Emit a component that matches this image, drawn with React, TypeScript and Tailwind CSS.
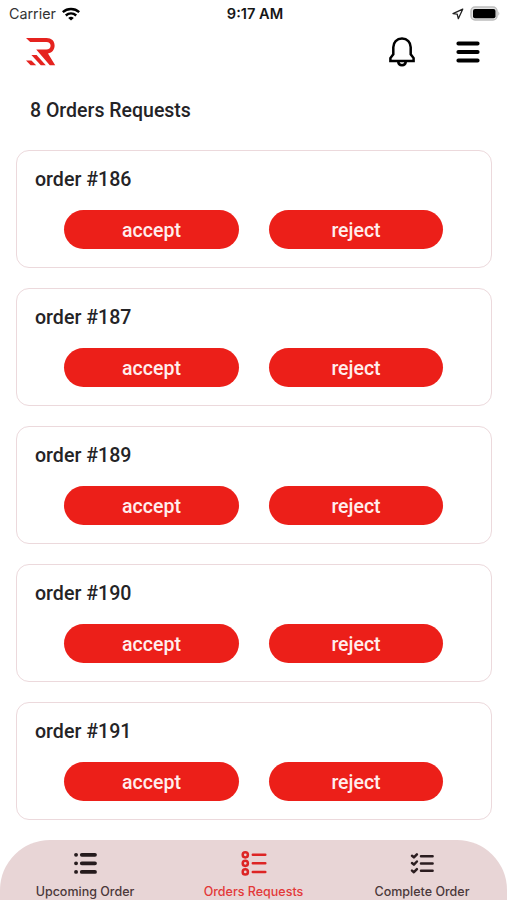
import React from "react";

const orders: number[] = [186, 187, 189, 190, 191];

function Wifi() {
  return (
    <svg width="18" height="14" viewBox="0 0 18 14" fill="none" stroke="#000" strokeWidth="2.4">
      <path d="M.8 5.1C5.4.9 12.6.9 17.2 5.1" />
      <path d="M3.8 8.5C6.8 5.7 11.2 5.7 14.2 8.5" />
      <path d="M9 13.6 6.2 10.9Q9 8.6 11.8 10.9Z" fill="#000" stroke="none" />
    </svg>
  );
}

function LocationArrow() {
  return (
    <svg width="12" height="12" viewBox="0 0 12 12" fill="none" stroke="#222" strokeWidth="1.3" strokeLinejoin="round">
      <path d="M10.7 1.2 1 5.6 5.2 6.2 6.3 10.7Z" />
    </svg>
  );
}

function Battery() {
  return (
    <svg width="31" height="15" viewBox="0 0 31 15">
      <rect x="1" y="1" width="26" height="13" rx="4" fill="#e3e3e3" stroke="#bdbdbd" strokeWidth="1.5" />
      <rect x="3" y="3" width="22.5" height="9.2" rx="2" fill="#000" />
      <path d="M28.3 5.2Q30.4 7.5 28.3 9.8Z" fill="#bdbdbd" />
    </svg>
  );
}

function Logo() {
  return (
    <svg width="30" height="28" viewBox="0 0 30 28" fill="#e5231f">
      <path d="M0 0H20.5C25.5 0 28.6 3 28.6 7.4 28.6 11.4 26.3 14.6 22 15.4L29.2 27.3H23.8L10.2 11.4H20.2C23 11.4 24.6 10 24.6 7.7 24.6 5.4 23 4 20.4 4H4.2Z" />
      <path d="M5.4 17H10.6L19.8 27.3H14.8Z" />
      <path d="M0 22.4H5.4L10.2 27.3H4.6Z" />
    </svg>
  );
}

function Bell() {
  return (
    <svg width="26" height="30" viewBox="0 0 26 30" fill="none" stroke="#000" strokeWidth="2.5" strokeLinejoin="miter">
      <path d="M13 1.6C7.7 1.6 4.3 5.3 4.3 10.3V17.3L1.4 21.1V24.1H24.6V21.1L21.7 17.3V10.3C21.7 5.3 18.3 1.6 13 1.6Z" />
      <path d="M9.2 24.6C9.4 27 10.8 28.2 13 28.2S16.6 27 16.8 24.6" />
    </svg>
  );
}

function Menu() {
  return (
    <svg width="24" height="22" viewBox="0 0 24 22" stroke="#000" strokeWidth="4" strokeLinecap="round">
      <path d="M2.4 2.4H21.6M2.4 11H21.6M2.4 19.6H21.6" />
    </svg>
  );
}

function ListIcon() {
  return (
    <svg width="24" height="26" viewBox="0 0 24 26" stroke="#251b1d" strokeWidth="3.8" strokeLinecap="round">
      <path d="M3 4.8h.1M3 13.3h.1M3 21.9h.1M8.8 4.8H22M8.8 13.3H22M8.8 21.9H22" />
    </svg>
  );
}

function RequestsIcon() {
  return (
    <svg width="26" height="26" viewBox="0 0 26 26" fill="none" stroke="#dd2525" strokeWidth="2.5" strokeLinecap="round">
      <circle cx="4.3" cy="4.8" r="2.6" />
      <circle cx="4.3" cy="13.3" r="2.6" />
      <circle cx="4.3" cy="21.9" r="2.6" />
      <path d="M11.8 4.8H24.3M11.8 13.3H24.3M11.8 21.9H24.3" />
    </svg>
  );
}

function CheckIcon() {
  return (
    <svg width="24" height="26" viewBox="0 0 24 26" fill="none" stroke="#2b1d20" strokeWidth="2.5" strokeLinecap="round" strokeLinejoin="round">
      <path d="M2 5.8 3.9 7.4 6.9 4.3M2 13 3.9 14.6 6.9 11.5M2 20.6 3.9 22.2 6.9 19.1" />
      <path d="M11 6.2H22.6M11 13.4H22.6M11 20.8H22.6" />
    </svg>
  );
}

function OrderCard({ id }: { id: number }) {
  return (
    <article className="h-[118px] rounded-[13px] border-[1.5px] border-[#ecd9dc] pt-[17px]">
      <h2 className="pl-[18px] text-[19.6px] leading-6 font-medium text-[#242326]">order #{id}</h2>
      <div className="mt-[18px] flex gap-[30px] pl-[47px]">
        <button className="h-[39px] w-[175px] rounded-full bg-[#ec1f19] pt-[2px] text-[19.5px] font-medium text-[#ffeeed]">accept</button>
        <button className="h-[39px] w-[174px] rounded-full bg-[#ec1f19] pt-[2px] text-[19.5px] font-medium text-[#ffeeed]">reject</button>
      </div>
    </article>
  );
}

export default function App() {
  return (
    <div className="flex h-[900px] w-[507px] flex-col overflow-hidden bg-white font-[Roboto,sans-serif]">
      <header className="flex h-[27px] items-center font-[Inter,sans-serif] text-[14px] text-[#161616]">
        <div className="flex flex-1 items-center gap-[6px] pl-[9px]">
          <span className="text-[14.3px] text-[#333]">Carrier</span>
          <Wifi />
        </div>
        <span className="pt-[2px] text-[14.6px] font-semibold">9:17 AM</span>
        <div className="flex flex-1 items-center justify-end gap-[6px] pr-[6px]">
          <LocationArrow />
          <Battery />
        </div>
      </header>
      <div className="mt-px flex h-[48px] items-center justify-between pr-[27px] pl-[26px]">
        <Logo />
        <div className="flex items-center gap-[41px]">
          <Bell />
          <Menu />
        </div>
      </div>
      <h1 className="mt-[23px] pl-[30px] text-[19.5px] leading-6 font-medium text-[#242326]">8 Orders Requests</h1>
      <main className="mt-[27px] flex flex-col gap-[20px] pr-[15px] pl-[16px]">
        {orders.map((id) => (
          <OrderCard key={id} id={id} />
        ))}
      </main>
      <nav className="mt-auto flex h-[60px] justify-between rounded-t-[50px] bg-[#e8d5d6] px-[35px] pt-[10px] font-[Inter,sans-serif] text-[12.5px] leading-4 font-medium text-[#4b383a]">
        <div className="flex w-[100px] flex-col items-center gap-[8px] whitespace-nowrap">
          <ListIcon />
          <span>Upcoming Order</span>
        </div>
        <div className="flex w-[100px] flex-col items-center gap-[8px] whitespace-nowrap text-[#e33838]">
          <RequestsIcon />
          <span>Orders Requests</span>
        </div>
        <div className="flex w-[100px] flex-col items-center gap-[8px] whitespace-nowrap">
          <CheckIcon />
          <span>Complete Order</span>
        </div>
      </nav>
    </div>
  );
}
